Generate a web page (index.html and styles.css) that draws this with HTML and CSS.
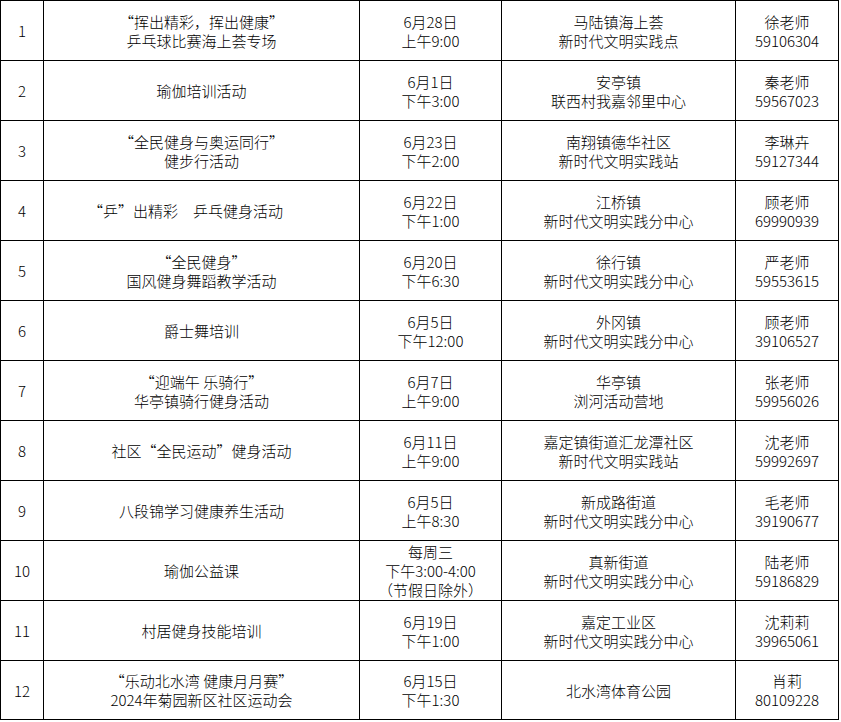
FILE: index.html
```html
<!DOCTYPE html>
<html lang="zh-CN">
<head>
<meta charset="utf-8">
<title>活动表</title>
<link rel="stylesheet" href="styles.css">
</head>
<body>
<table class="schedule">
  <colgroup>
    <col class="c-no"><col class="c-name"><col class="c-time"><col class="c-place"><col class="c-contact">
  </colgroup>
  <tbody>
    <tr><td>1</td><td>“挥出精彩，挥出健康”<br>乒乓球比赛海上荟专场</td><td>6月28日<br>上午9:00</td><td>马陆镇海上荟<br>新时代文明实践点</td><td>徐老师<br>59106304</td></tr>
    <tr><td>2</td><td>瑜伽培训活动</td><td>6月1日<br>下午3:00</td><td>安亭镇<br>联西村我嘉邻里中心</td><td>秦老师<br>59567023</td></tr>
    <tr><td>3</td><td>“全民健身与奥运同行”<br>健步行活动</td><td>6月23日<br>下午2:00</td><td>南翔镇德华社区<br>新时代文明实践站</td><td>李琳卉<br>59127344</td></tr>
    <tr><td>4</td><td class="shift">“乒”出精彩　乒乓健身活动</td><td>6月22日<br>下午1:00</td><td>江桥镇<br>新时代文明实践分中心</td><td>顾老师<br>69990939</td></tr>
    <tr><td>5</td><td>“全民健身”<br>国风健身舞蹈教学活动</td><td>6月20日<br>下午6:30</td><td>徐行镇<br>新时代文明实践分中心</td><td>严老师<br>59553615</td></tr>
    <tr><td>6</td><td>爵士舞培训</td><td>6月5日<br>下午12:00</td><td>外冈镇<br>新时代文明实践分中心</td><td>顾老师<br>39106527</td></tr>
    <tr><td>7</td><td>“迎端午 乐骑行”<br>华亭镇骑行健身活动</td><td>6月7日<br>上午9:00</td><td>华亭镇<br>浏河活动营地</td><td>张老师<br>59956026</td></tr>
    <tr><td>8</td><td>社区“全民运动”健身活动</td><td>6月11日<br>上午9:00</td><td>嘉定镇街道汇龙潭社区<br>新时代文明实践站</td><td>沈老师<br>59992697</td></tr>
    <tr><td>9</td><td>八段锦学习健康养生活动</td><td>6月5日<br>上午8:30</td><td>新成路街道<br>新时代文明实践分中心</td><td>毛老师<br>39190677</td></tr>
    <tr><td>10</td><td>瑜伽公益课</td><td>每周三<br>下午3:00-4:00<br>（节假日除外）</td><td>真新街道<br>新时代文明实践分中心</td><td>陆老师<br>59186829</td></tr>
    <tr><td>11</td><td>村居健身技能培训</td><td>6月19日<br>下午1:00</td><td>嘉定工业区<br>新时代文明实践分中心</td><td>沈莉莉<br>39965061</td></tr>
    <tr class="last"><td>12</td><td>“乐动北水湾 健康月月赛”<br>2024年菊园新区社区运动会</td><td>6月15日<br>下午1:30</td><td>北水湾体育公园</td><td>肖莉<br>80109228</td></tr>
  </tbody>
</table>
</body>
</html>
```
FILE: styles.css
```css
html, body {
  margin: 0;
  padding: 0;
  background: #ffffff;
}

body {
  font-family: "Noto Sans CJK SC", "DejaVu Sans", sans-serif;
  font-size: 15px;
  font-weight: 300;
  color: #000000;
}

.schedule {
  border-collapse: separate;
  border-spacing: 0;
  table-layout: fixed;
  width: 839px;
  border-top: 1px solid #000;
  border-left: 1px solid #000;
}

.c-no { width: 43px; }
.c-name { width: 316px; }
.c-time { width: 142px; }
.c-place { width: 234px; }
.c-contact { width: 103px; }

.schedule td {
  border-right: 1px solid #000;
  border-bottom: 1px solid #000;
  height: 59px;
  padding: 0;
  text-align: center;
  vertical-align: middle;
  line-height: 19px;
  white-space: nowrap;
}

.schedule tr.last td {
  height: 58px;
}

.schedule td.shift {
  padding-right: 32px;
  word-spacing: 8px;
}
```
